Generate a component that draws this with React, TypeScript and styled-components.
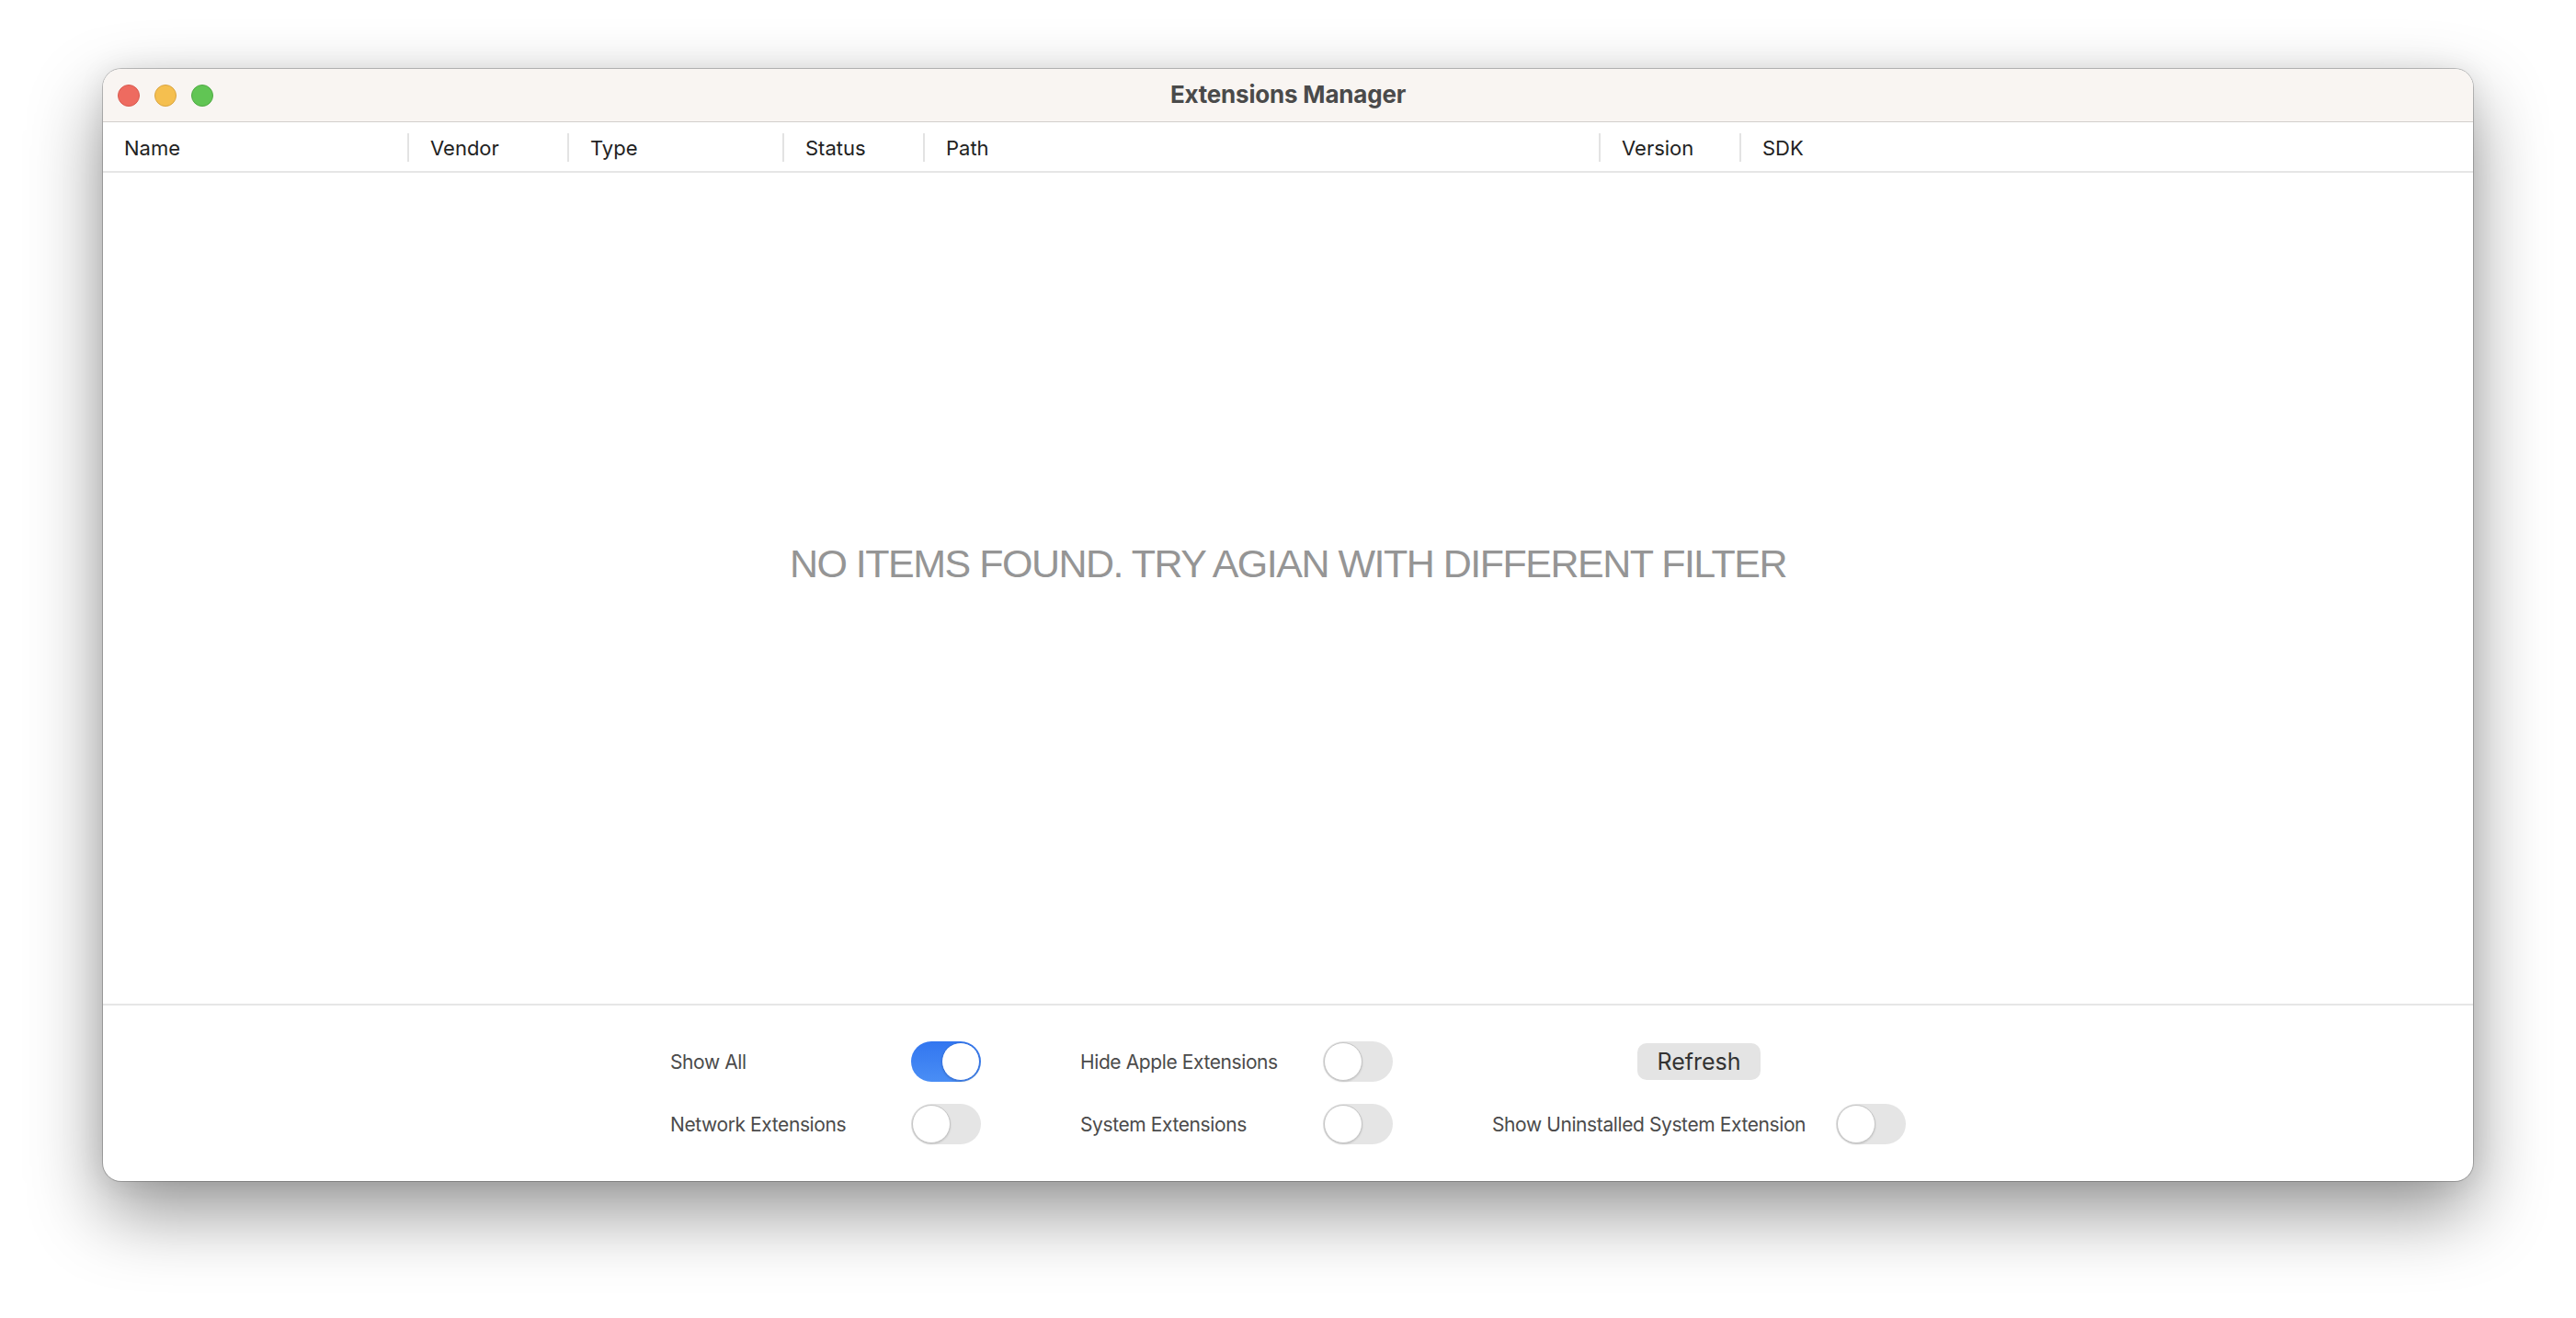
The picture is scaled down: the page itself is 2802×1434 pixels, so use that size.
import React from "react";
import styled, { createGlobalStyle } from "styled-components";

const GlobalStyle = createGlobalStyle`
  html, body {
    margin: 0;
    padding: 0;
    background: #ffffff;
    font-family: Inter, "Noto Sans", sans-serif;
  }
  * { box-sizing: border-box; }
`;

const Page = styled.div`
  width: 2802px;
  height: 1434px;
  padding: 75px 112px;
  overflow: hidden;
`;

const Window = styled.div`
  height: 1210px;
  display: flex;
  flex-direction: column;
  background: #ffffff;
  border-radius: 20px;
  overflow: hidden;
  box-shadow: 0 0 0 1px rgba(0, 0, 0, 0.22), 0 34px 80px rgba(0, 0, 0, 0.42),
    0 0 30px rgba(0, 0, 0, 0.08);
`;

const TitleBar = styled.div`
  height: 58px;
  flex-shrink: 0;
  display: grid;
  grid-template-columns: 1fr auto 1fr;
  align-items: center;
  background: #f9f5f2;
  border-bottom: 1px solid #d2cfcc;
`;

const Lights = styled.div`
  display: flex;
  gap: 16px;
  padding-left: 16px;
`;

const Light = styled.span<{ $fill: string; $edge: string }>`
  width: 24px;
  height: 24px;
  border-radius: 50%;
  background: ${(p) => p.$fill};
  border: 1px solid ${(p) => p.$edge};
`;

const Title = styled.div`
  font-size: 26px;
  font-weight: 700;
  color: #4a4a4a;
  letter-spacing: -0.2px;
  padding-bottom: 2px;
`;

const HeaderRow = styled.div`
  height: 55px;
  flex-shrink: 0;
  display: flex;
  align-items: center;
  padding-top: 2px;
  border-bottom: 2px solid #e6e6e6;
`;

const HeaderCell = styled.div<{ $width?: number; $first?: boolean }>`
  ${(p) => (p.$width ? `width: ${p.$width}px;` : "flex: 1;")}
  height: 31px;
  display: flex;
  align-items: center;
  padding-left: 23px;
  border-left: ${(p) => (p.$first ? "none" : "2px solid #e3e3e3")};
  font-size: 22px;
  color: #222222;
`;

const Body = styled.div`
  flex: 1;
  display: flex;
  align-items: center;
  justify-content: center;
  padding-bottom: 54px;
`;

const EmptyText = styled.div`
  font-family: "Liberation Sans", Arial, sans-serif;
  font-size: 43px;
  letter-spacing: -1.5px;
  color: #959595;
`;

const Footer = styled.div`
  flex-shrink: 0;
  border-top: 2px solid #e6e6e6;
  padding: 39px 0 40px;
  display: flex;
  justify-content: center;
  gap: 108px;
`;

const Group = styled.div<{ $width: number }>`
  width: ${(p) => p.$width}px;
  display: flex;
  flex-direction: column;
  gap: 24px;
`;

const Row = styled.div<{ $center?: boolean }>`
  height: 44px;
  display: flex;
  align-items: center;
  justify-content: ${(p) => (p.$center ? "center" : "space-between")};
`;

const Label = styled.span`
  font-size: 21px;
  letter-spacing: -0.4px;
  color: #4b4b4b;
`;

const Track = styled.div<{ $on?: boolean }>`
  width: 76px;
  height: 44px;
  border-radius: 22px;
  padding: 1px;
  display: flex;
  justify-content: ${(p) => (p.$on ? "flex-end" : "flex-start")};
  background: ${(p) =>
    p.$on ? "linear-gradient(#3276f0, #4a8ef5)" : "#e5e5e5"};
`;

const Knob = styled.div<{ $on?: boolean }>`
  width: 42px;
  height: 42px;
  border-radius: 50%;
  background: #ffffff;
  border: 1px solid ${(p) => (p.$on ? "#2f6fe0" : "#c6c6c6")};
  box-shadow: 0 1px 2px rgba(0, 0, 0, 0.15);
`;

const Button = styled.button`
  width: 134px;
  height: 40px;
  border: none;
  border-radius: 10px;
  background: #e4e4e4;
  font-family: Inter, "Noto Sans", sans-serif;
  font-size: 25px;
  color: #333333;
  padding: 0;
`;

function Toggle({ on }: { on?: boolean }) {
  return (
    <Track $on={on}>
      <Knob $on={on} />
    </Track>
  );
}

const columns: { label: string; width?: number }[] = [
  { label: "Name", width: 331 },
  { label: "Vendor", width: 174 },
  { label: "Type", width: 234 },
  { label: "Status", width: 153 },
  { label: "Path", width: 735 },
  { label: "Version", width: 153 },
  { label: "SDK" },
];

export default function App() {
  return (
    <>
      <GlobalStyle />
      <Page>
        <Window>
          <TitleBar>
            <Lights>
              <Light $fill="#ee6b60" $edge="#d85a4f" />
              <Light $fill="#f5bf4f" $edge="#d9a441" />
              <Light $fill="#61c554" $edge="#50a944" />
            </Lights>
            <Title>Extensions Manager</Title>
            <div />
          </TitleBar>
          <HeaderRow>
            {columns.map((c, i) => (
              <HeaderCell key={c.label} $width={c.width} $first={i === 0}>
                {c.label}
              </HeaderCell>
            ))}
          </HeaderRow>
          <Body>
            <EmptyText>NO ITEMS FOUND. TRY AGIAN WITH DIFFERENT FILTER</EmptyText>
          </Body>
          <Footer>
            <Group $width={338}>
              <Row>
                <Label>Show All</Label>
                <Toggle on />
              </Row>
              <Row>
                <Label>Network Extensions</Label>
                <Toggle />
              </Row>
            </Group>
            <Group $width={340}>
              <Row>
                <Label>Hide Apple Extensions</Label>
                <Toggle />
              </Row>
              <Row>
                <Label>System Extensions</Label>
                <Toggle />
              </Row>
            </Group>
            <Group $width={450}>
              <Row $center>
                <Button>Refresh</Button>
              </Row>
              <Row>
                <Label>Show Uninstalled System Extension</Label>
                <Toggle />
              </Row>
            </Group>
          </Footer>
        </Window>
      </Page>
    </>
  );
}
